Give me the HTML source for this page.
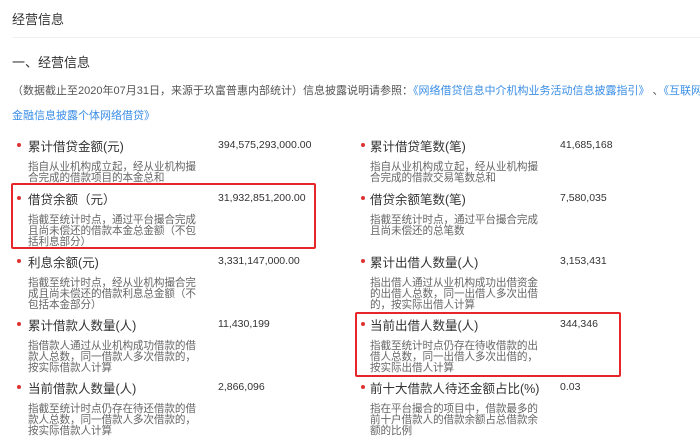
<!DOCTYPE html><html><head><meta charset="utf-8"><style>
body{margin:0;width:700px;height:443px;background:#fff;position:relative;overflow:hidden;font-family:"Liberation Sans","Noto Sans CJK SC",sans-serif;color:#333}
.a{position:absolute;white-space:nowrap}
.t{font-size:12.5px;color:#333}
.v{font-size:10.5px;color:#333;margin-top:1px}
.d{font-size:10.6px;line-height:10.8px;color:#666;width:172px;white-space:normal;letter-spacing:-0.1px;margin-top:4px}
.b{position:absolute;width:4px;height:4px;border-radius:50%;background:#d33}
.box{position:absolute;border:2px solid #e8262a;border-radius:2px}
</style></head><body>
<div class="a" style="left:12px;top:9px;font-size:13px;color:#333">经营信息</div>
<div style="position:absolute;left:12px;top:37px;width:688px;height:1px;background:#f0f0f0"></div>
<div class="a" style="left:12px;top:52px;font-size:13px;color:#333">一、经营信息</div>
<div class="a" style="left:12px;top:82px;font-size:11px;color:#555">（数据截止至2020年07月31日，来源于玖富普惠内部统计）信息披露说明请参照：<span style="color:#3a8ee6">《网络借贷信息中介机构业务活动信息披露指引》</span> 、<span style="color:#3a8ee6">《互联网</span></div>
<div class="a" style="left:12px;top:107px;font-size:11px;color:#3a8ee6">金融信息披露个体网络借贷》</div>

<div class="b" style="left:17px;top:143px"></div><div class="a t" style="left:28px;top:136px">累计借贷金额(元)</div><div class="a v" style="left:218px;top:138px">394,575,293,000.00</div><div class="a d" style="left:28px;top:158px">指自从业机构成立起，经从业机构撮合完成的借款项目的本金总和</div>
<div class="b" style="left:17px;top:196px"></div><div class="a t" style="left:28px;top:189px">借贷余额（元）</div><div class="a v" style="left:218px;top:191px">31,932,851,200.00</div><div class="a d" style="left:28px;top:211px">指截至统计时点，通过平台撮合完成且尚未偿还的借款本金总金额（不包括利息部分）</div>
<div class="b" style="left:17px;top:259px"></div><div class="a t" style="left:28px;top:252px">利息余额(元)</div><div class="a v" style="left:218px;top:254px">3,331,147,000.00</div><div class="a d" style="left:28px;top:274px">指截至统计时点，经从业机构撮合完成且尚未偿还的借款利息总金额（不包括本金部分）</div>
<div class="b" style="left:17px;top:322px"></div><div class="a t" style="left:28px;top:315px">累计借款人数量(人)</div><div class="a v" style="left:218px;top:317px">11,430,199</div><div class="a d" style="left:28px;top:337px">指借款人通过从业机构成功借款的借款人总数，同一借款人多次借款的，按实际借款人计算</div>
<div class="b" style="left:17px;top:385px"></div><div class="a t" style="left:28px;top:378px">当前借款人数量(人)</div><div class="a v" style="left:218px;top:380px">2,866,096</div><div class="a d" style="left:28px;top:400px">指截至统计时点仍存在待还借款的借款人总数，同一借款人多次借款的，按实际借款人计算</div>

<div class="b" style="left:361px;top:143px"></div><div class="a t" style="left:370px;top:136px">累计借贷笔数(笔)</div><div class="a v" style="left:560px;top:138px">41,685,168</div><div class="a d" style="left:370px;top:158px">指自从业机构成立起，经从业机构撮合完成的借款交易笔数总和</div>
<div class="b" style="left:361px;top:196px"></div><div class="a t" style="left:370px;top:189px">借贷余额笔数(笔)</div><div class="a v" style="left:560px;top:191px">7,580,035</div><div class="a d" style="left:370px;top:211px">指截至统计时点，通过平台撮合完成且尚未偿还的总笔数</div>
<div class="b" style="left:361px;top:259px"></div><div class="a t" style="left:370px;top:252px">累计出借人数量(人)</div><div class="a v" style="left:560px;top:254px">3,153,431</div><div class="a d" style="left:370px;top:274px">指出借人通过从业机构成功出借资金的出借人总数，同一出借人多次出借的，按实际出借人计算</div>
<div class="b" style="left:361px;top:322px"></div><div class="a t" style="left:370px;top:315px">当前出借人数量(人)</div><div class="a v" style="left:560px;top:317px">344,346</div><div class="a d" style="left:370px;top:337px">指截至统计时点仍存在待收借款的出借人总数，同一出借人多次出借的，按实际出借人计算</div>
<div class="b" style="left:361px;top:385px"></div><div class="a t" style="left:370px;top:378px">前十大借款人待还金额占比(%)</div><div class="a v" style="left:560px;top:380px">0.03</div><div class="a d" style="left:370px;top:400px">指在平台撮合的项目中，借款最多的前十户借款人的借款余额占总借款余额的比例</div>

<div class="box" style="left:11px;top:183px;width:301px;height:62px"></div>
<div class="box" style="left:355px;top:312px;width:262px;height:61px"></div>
</body></html>
